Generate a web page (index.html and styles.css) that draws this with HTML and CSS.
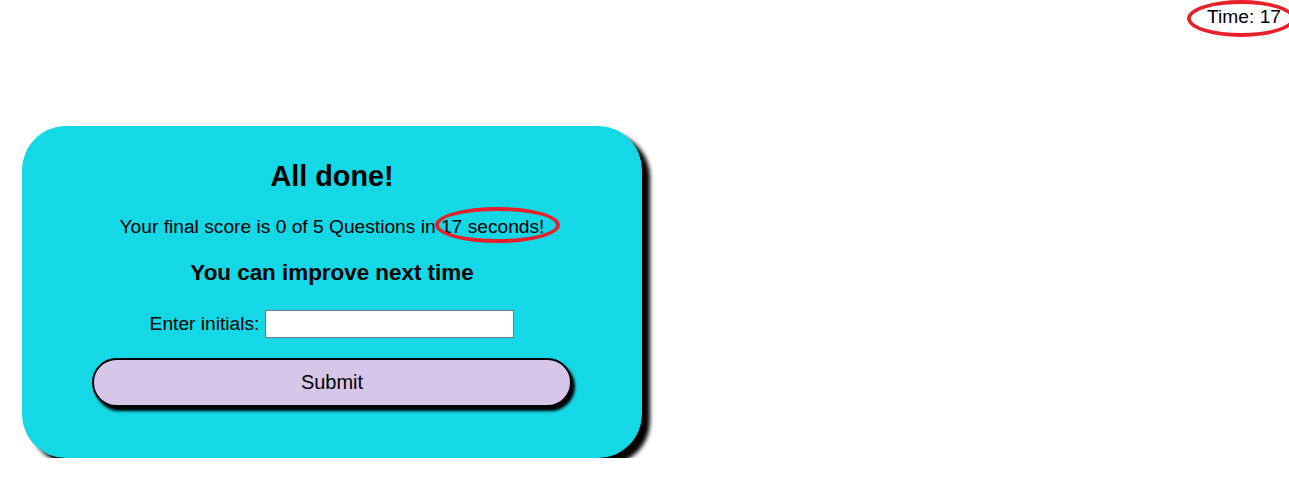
FILE: index.html
```html
<!DOCTYPE html>
<html>
<head>
<meta charset="utf-8">
<link rel="stylesheet" href="styles.css">
</head>
<body>
<header class="topbar">
  <div class="timer">Time: 17</div>
  <span class="mark mark-timer"></span>
</header>
<main class="stage">
  <section class="card">
    <h1 class="title">All done!</h1>
    <p class="score">Your final score is 0 of 5 Questions in <span class="secs">17 seconds!<span class="mark mark-secs"></span></span></p>
    <h2 class="msg">You can improve next time</h2>
    <form class="form">
      <div class="field">
        <label class="label" for="initials">Enter initials:</label>
        <input class="input" id="initials" type="text">
      </div>
      <button class="submit" type="button">Submit</button>
    </form>
  </section>
</main>
</body>
</html>
```
FILE: styles.css
```css
html, body {
  margin: 0;
  padding: 0;
  background: #ffffff;
  font-family: "Liberation Sans", Arial, sans-serif;
  color: #000;
}
.topbar {
  position: relative;
  height: 36px;
  display: flex;
  justify-content: flex-end;
  align-items: center;
  padding-right: 8px;
}
.timer {
  font-size: 19.2px;
  line-height: 22px;
  margin-top: -2px;
}
.mark {
  position: absolute;
  border: 4px solid #e8202a;
  border-radius: 50%;
  box-sizing: border-box;
  pointer-events: none;
}
.mark-timer {
  left: 1187px;
  top: 0px;
  width: 108px;
  height: 37px;
}
.stage {
  padding: 90px 0 0 22px;
}
.card {
  width: 620px;
  height: 332px;
  box-sizing: border-box;
  background: #14d8e6;
  border-radius: 44px;
  box-shadow: 8px 7px 4px #000;
  display: flex;
  flex-direction: column;
  align-items: center;
  padding-top: 33px;
}
.title {
  margin: 0;
  font-size: 28.8px;
  line-height: 34px;
  font-weight: bold;
}
.score {
  margin: 23px 0 0;
  font-size: 19.2px;
  line-height: 22px;
}
.secs {
  position: relative;
}
.mark-secs {
  left: -6px;
  top: -9px;
  width: 125px;
  height: 36px;
}
.msg {
  margin: 22px 0 0;
  font-size: 22.4px;
  line-height: 26px;
  font-weight: bold;
}
.form {
  margin-top: 24px;
  display: flex;
  flex-direction: column;
  align-items: center;
}
.field {
  display: flex;
  align-items: center;
  gap: 6px;
}
.label {
  font-size: 19.2px;
  line-height: 22px;
}
.input {
  width: 249px;
  height: 28px;
  box-sizing: border-box;
  border: 1px solid #767676;
  background: #fff;
  margin: 0;
  font-size: 16px;
}
.submit {
  margin-top: 20px;
  width: 480px;
  height: 49px;
  box-sizing: border-box;
  background: #d6c6ea;
  border: 2px solid #000;
  border-radius: 25px;
  box-shadow: 3px 4px 3px #000;
  font-family: "Liberation Sans", Arial, sans-serif;
  font-size: 20px;
  color: #000;
  padding: 0;
}
```
